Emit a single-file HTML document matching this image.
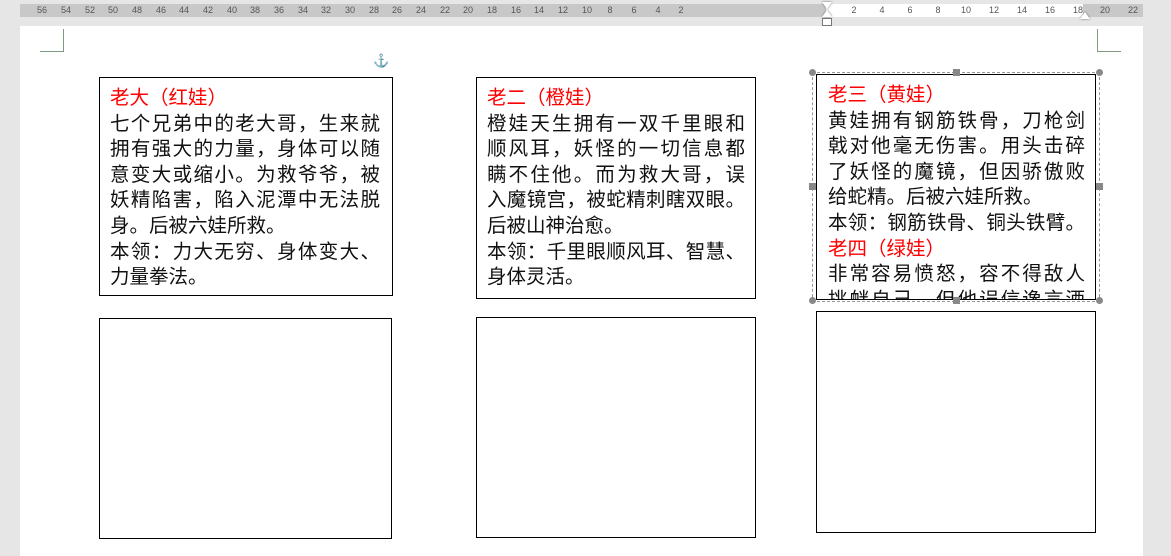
<!DOCTYPE html>
<html><head><meta charset="utf-8"><style>
body{margin:0;width:1171px;height:551px;background:#e6e6e6;position:relative;overflow:hidden;font-family:"Liberation Sans","Noto Sans CJK SC",sans-serif}
.ruler{position:absolute;top:4px;height:13px;background:#c8c8c8;font-size:9px;color:#555}
.rt{position:absolute;top:1px;transform:translateX(-50%)}
.page{position:absolute;left:20px;top:26px;width:1123px;height:530px;background:#fff}
.box{position:absolute;border:1px solid #000;background:#fff;overflow:hidden}
.tx{position:absolute;font-size:19.5px;line-height:25.6px;color:#111}
.tx div{white-space:nowrap}
.j{text-align:justify;text-align-last:justify;white-space:normal!important}
.r{color:#f00}
.corner{position:absolute;border-color:#7f9a7f;border-style:solid;width:23px;height:22px}
.h{position:absolute;width:7px;height:7px;background:#888;border-radius:50%}
.hs{border-radius:0}
</style></head><body>
<div class="ruler" style="left:20px;width:1123px"></div>
<div class="ruler" style="left:826px;width:257px;background:#fff"></div>
<div style="position:absolute;left:20px;top:4px;width:1123px;height:13px;font-size:9px;color:#555">
<span class="rt" style="left:22px">56</span><span class="rt" style="left:46px">54</span><span class="rt" style="left:70px">52</span><span class="rt" style="left:93px">50</span><span class="rt" style="left:117px">48</span><span class="rt" style="left:141px">46</span><span class="rt" style="left:164px">44</span><span class="rt" style="left:188px">42</span><span class="rt" style="left:212px">40</span><span class="rt" style="left:235px">38</span><span class="rt" style="left:259px">36</span><span class="rt" style="left:283px">34</span><span class="rt" style="left:306px">32</span><span class="rt" style="left:330px">30</span><span class="rt" style="left:354px">28</span><span class="rt" style="left:377px">26</span><span class="rt" style="left:401px">24</span><span class="rt" style="left:425px">22</span><span class="rt" style="left:448px">20</span><span class="rt" style="left:472px">18</span><span class="rt" style="left:496px">16</span><span class="rt" style="left:519px">14</span><span class="rt" style="left:543px">12</span><span class="rt" style="left:567px">10</span><span class="rt" style="left:590px">8</span><span class="rt" style="left:614px">6</span><span class="rt" style="left:638px">4</span><span class="rt" style="left:661px">2</span>
<span class="rt" style="left:834px">2</span><span class="rt" style="left:862px">4</span><span class="rt" style="left:890px">6</span><span class="rt" style="left:918px">8</span><span class="rt" style="left:946px">10</span><span class="rt" style="left:974px">12</span><span class="rt" style="left:1002px">14</span><span class="rt" style="left:1030px">16</span><span class="rt" style="left:1058px">18</span><span class="rt" style="left:1085px">20</span><span class="rt" style="left:1113px">22</span></div>
<div style="position:absolute;left:822px;top:2px;width:0;height:0;border-left:5px solid transparent;border-right:5px solid transparent;border-top:7px solid #fff;filter:drop-shadow(0 0 1px #666)"></div>
<div style="position:absolute;left:822px;top:10px;width:0;height:0;border-left:5px solid transparent;border-right:5px solid transparent;border-bottom:7px solid #fff;filter:drop-shadow(0 0 1px #666)"></div>
<div style="position:absolute;left:822px;top:18px;width:8px;height:6px;background:#fff;border:1px solid #777"></div>
<div style="position:absolute;left:1080px;top:12px;width:0;height:0;border-left:5px solid transparent;border-right:5px solid transparent;border-bottom:7px solid #fff;filter:drop-shadow(0 0 1px #666)"></div>
<div class="page"></div>
<div class="corner" style="left:40px;top:29px;border-width:0 1px 1px 0"></div>
<div class="corner" style="left:1097px;top:29px;border-width:0 0 1px 1px"></div>
<div style="position:absolute;left:373px;top:53px;color:#4a7ab5;font-size:13px">⚓</div>

<div class="box" style="left:99px;top:77px;width:292px;height:217px"></div>
<div class="tx" style="left:110px;top:86px;width:270px">
<div class="r">老大（红娃）</div>
<div class="j">七个兄弟中的老大哥，生来就</div>
<div class="j">拥有强大的力量，身体可以随</div>
<div class="j">意变大或缩小。为救爷爷，被</div>
<div class="j">妖精陷害，陷入泥潭中无法脱</div>
<div>身。后被六娃所救。</div>
<div class="j">本领：力大无穷、身体变大、</div>
<div>力量拳法。</div></div>

<div class="box" style="left:476px;top:77px;width:278px;height:220px"></div>
<div class="tx" style="left:487px;top:86px;width:258px">
<div class="r">老二（橙娃）</div>
<div class="j">橙娃天生拥有一双千里眼和</div>
<div class="j">顺风耳，妖怪的一切信息都</div>
<div class="j">瞒不住他。而为救大哥，误</div>
<div class="j">入魔镜宫，被蛇精刺瞎双眼。</div>
<div>后被山神治愈。</div>
<div class="j">本领：千里眼顺风耳、智慧、</div>
<div>身体灵活。</div></div>

<div style="position:absolute;left:812px;top:72px;width:286px;height:228px;border:1px dashed #999"></div>
<div class="box" style="left:816px;top:74px;width:278px;height:224px">
<div class="tx" style="left:11px;top:8px;width:257px">
<div class="r">老三（黄娃）</div>
<div class="j">黄娃拥有钢筋铁骨，刀枪剑</div>
<div class="j">戟对他毫无伤害。用头击碎</div>
<div class="j">了妖怪的魔镜，但因骄傲败</div>
<div>给蛇精。后被六娃所救。</div>
<div class="j">本领：钢筋铁骨、铜头铁臂。</div>
<div class="r">老四（绿娃）</div>
<div class="j">非常容易愤怒，容不得敌人</div>
<div class="j">挑衅自己，但他误信谗言酒</div></div></div>
<div class="h" style="left:809px;top:69px"></div><div class="h hs" style="left:953px;top:69px"></div><div class="h" style="left:1096px;top:69px"></div>
<div class="h hs" style="left:809px;top:183px"></div><div class="h hs" style="left:1096px;top:183px"></div>
<div class="h" style="left:809px;top:297px"></div><div class="h hs" style="left:953px;top:297px"></div><div class="h" style="left:1096px;top:297px"></div>

<div class="box" style="left:99px;top:318px;width:291px;height:219px"></div>
<div class="box" style="left:476px;top:317px;width:278px;height:219px"></div>
<div class="box" style="left:816px;top:311px;width:278px;height:220px"></div>
</body></html>
